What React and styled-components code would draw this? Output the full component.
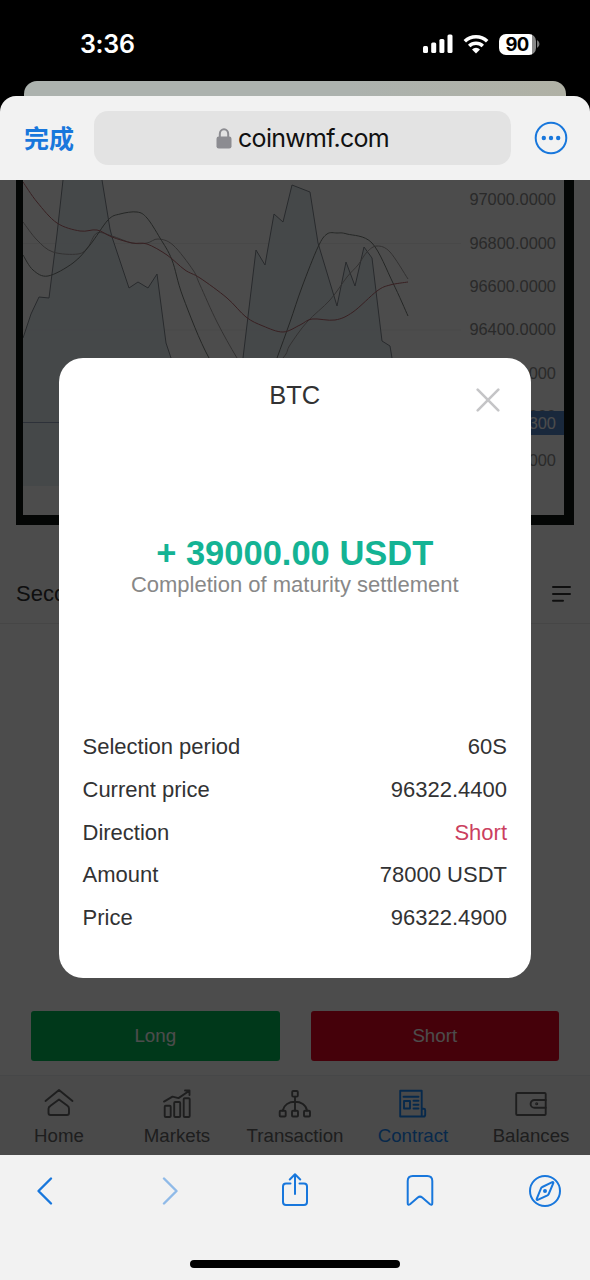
import React from 'react';
// Styling
import styled, {createGlobalStyle} from 'styled-components'

// Data
const prices = ['97000.0000', '96800.0000', '96600.0000', '96400.0000', '96200.0000', '96000.0000', '95800.0000']

const details = [
    {label: 'Selection period', value: '60S'},
    {label: 'Current price', value: '96322.4400'},
    {label: 'Direction', value: 'Short', short: true},
    {label: 'Amount', value: '78000 USDT'},
    {label: 'Price', value: '96322.4900'},
]

const priceLine = [
    [23, 338], [31, 314], [39, 297], [49, 298], [57, 234], [63, 180], [66, 150], [98, 150], [102, 180], [110, 229], [112, 237],
    [129, 288], [138, 282], [148, 288], [157, 274], [166, 343], [171, 358], [185, 400], [235, 400],
    [243, 358], [256, 250], [265, 265], [274, 214], [283, 222], [292, 185], [310, 192], [318, 243],
    [337, 306], [346, 262], [355, 286], [364, 247], [372, 258], [382, 341], [390, 346], [392, 358], [400, 410],
]
const slowLine = [
    [23, 182], [37, 202], [57, 223], [80, 231], [97, 230], [112, 237], [132, 243], [147, 244], [167, 255],
    [185, 270], [200, 278], [227, 298], [246, 317], [263, 326], [283, 332], [300, 325], [312, 319],
    [335, 320], [353, 312], [377, 291], [390, 285], [408, 282],
]
const fastLine = [
    [23, 255], [33, 270], [48, 276], [73, 263], [90, 245], [108, 220], [120, 214], [137, 212], [147, 218],
    [160, 238], [172, 260], [183, 297], [209, 358], [240, 400], [265, 390], [277, 358], [290, 322],
    [302, 287], [318, 247], [327, 234], [337, 233], [347, 234], [372, 243], [393, 283], [408, 316],
]
const midLine = [
    [23, 222], [37, 240], [53, 252], [78, 254], [88, 247], [97, 233], [112, 236], [132, 243], [147, 243],
    [158, 239], [173, 245], [193, 270], [200, 285], [217, 322], [237, 358], [255, 385], [283, 358],
    [290, 345], [307, 322], [330, 300], [347, 277], [358, 265], [367, 252], [377, 246], [390, 252], [408, 279],
]

const straight = points => 'M' + points.map(p => p.join(' ')).join('L')

// catmull-rom to bezier
const smooth = points => {
    let d = `M${points[0].join(' ')}`
    for (let i = 0; i < points.length - 1; i++) {
        const a = points[i - 1] || points[i]
        const b = points[i]
        const c = points[i + 1]
        const e = points[i + 2] || c
        d += `C${b[0] + (c[0] - a[0]) / 6} ${b[1] + (c[1] - a[1]) / 6} ${c[0] - (e[0] - b[0]) / 6} ${c[1] - (e[1] - b[1]) / 6} ${c[0]} ${c[1]}`
    }
    return d
}

const HomeIcon = () => (
    <TabIcon viewBox="0 0 36 34">
        <path d="M4.500 14L18 3l13.500 11M9.500 18.800L18 12.500l8.500 6.300q1.500 1 1.500 3V26q0 2-2 2H9.500q-2 0-2-2v-4.200q0-2 2-3z"/>
    </TabIcon>
)

const MarketsIcon = () => (
    <TabIcon viewBox="0 0 36 34">
        <rect x="5.700" y="18.700" width="6" height="11.300" rx="1"/>
        <rect x="15.200" y="15" width="6" height="15" rx="1"/>
        <rect x="24.700" y="11.300" width="6" height="18.700" rx="1"/>
        <path d="M5 14.600l8.500-5 6 1.500L30 4M26 3.500h4.500V8"/>
    </TabIcon>
)

const TransactionIcon = () => (
    <TabIcon viewBox="0 0 36 34">
        <rect x="15.200" y="4" width="5.600" height="5.600" rx="1"/>
        <rect x="2.700" y="23.700" width="6" height="5.800" rx="1"/>
        <rect x="15" y="23.700" width="6" height="5.800" rx="1"/>
        <rect x="27" y="23.700" width="6" height="5.800" rx="1"/>
        <path d="M18 9.600v14M5.700 23.500C7 18 12 14.800 18 14.800S29 18 30 23.500"/>
    </TabIcon>
)

const ContractIcon = () => (
    <TabIcon viewBox="0 0 36 34">
        <path d="M29.500 29.500H5.200V3.800h21.500v25.700M26.700 21.800h2q1.500 0 1.500 1.500v4.500q0 1.700-1.700 1.700M8.500 9.700h15"/>
        <rect x="9" y="14" width="6" height="7.500"/>
        <path d="M18.500 13.800h5M18.500 17.700h5M18.500 21.500h5"/>
    </TabIcon>
)

const BalancesIcon = () => (
    <TabIcon viewBox="0 0 36 34">
        <rect x="3.200" y="6" width="29.500" height="22" rx="1"/>
        <path d="M32.700 13H21.500a3.900 3.900 0 0 0 0 7.800h11.200"/>
        <circle cx="23.700" cy="16.800" r=".6"/>
    </TabIcon>
)

const tabs = [
    {name: 'Home', Icon: HomeIcon},
    {name: 'Markets', Icon: MarketsIcon},
    {name: 'Transaction', Icon: TransactionIcon},
    {name: 'Contract', Icon: ContractIcon, active: true},
    {name: 'Balances', Icon: BalancesIcon},
]

const StatusBar = () => (
    <Status>
        <Time>3:36</Time>
        <StatusIcons>
            <svg width="30" height="20" viewBox="0 0 30 20" fill="#fff">
                <rect x="0" y="12" width="5" height="7" rx="1.500"/>
                <rect x="8.200" y="8.500" width="5" height="10.500" rx="1.500"/>
                <rect x="16.400" y="5" width="5" height="14" rx="1.500"/>
                <rect x="24.500" y="0.500" width="5" height="18.500" rx="1.500"/>
            </svg>
            <svg width="26" height="20" viewBox="0 0 26 20" fill="none" stroke="#fff" strokeWidth="3.500">
                <path d="M1.800 7.300a16 16 0 0 1 22.400 0M6.200 12a9.800 9.800 0 0 1 13.600 0"/>
                <path d="M13 19.500l-4-4a5.600 5.600 0 0 1 8 0z" fill="#fff" stroke="none"/>
            </svg>
            <Battery>
                <Level>90</Level>
                <svg width="4" height="8" viewBox="0 0 4 8" fill="#777"><path d="M0 0q2.500 1.500 2.500 4T0 8z"/></svg>
            </Battery>
        </StatusIcons>
    </Status>
)

const Chart = () => (
    <ChartFrame>
        <Plot viewBox="23 180 438 335">
            <path d="M23 243.500H461M23 330H461" stroke="#f1f1f1"/>
            <path d={straight(priceLine) + 'V486H23Z'} fill="#e4edf3" fillOpacity=".85"/>
            <path d="M23 422.500H461" stroke="#98a6c0"/>
            <path d={straight(priceLine)} stroke="#858c94"/>
            <path d={smooth(midLine)} stroke="#a9a5a5"/>
            <path d={smooth(fastLine)} stroke="#7a807c"/>
            <path d={smooth(slowLine)} stroke="#bb6a70"/>
        </Plot>
        <Axis>
            {prices.map(price => <AxisLabel key={price}>{price}</AxisLabel>)}
            <PriceTag>96005.8300</PriceTag>
        </Axis>
    </ChartFrame>
)

const ResultDialog = () => (
    <Overlay>
        <Dialog>
            <DialogHeader>
                <DialogTitle>BTC</DialogTitle>
                <CloseButton aria-label="Close">
                    <svg width="24" height="24" viewBox="0 0 24 24" fill="none" stroke="#c5c5c7" strokeWidth="2.600" strokeLinecap="round">
                        <path d="M1.700 1.700l20.600 20.600M22.300 1.700L1.700 22.300"/>
                    </svg>
                </CloseButton>
            </DialogHeader>
            <Profit>
                <h2>+ 39000.00 USDT</h2>
                <p>Completion of maturity settlement</p>
            </Profit>
            <Details>
                {details.map(({label, value, short}) => (
                    <DetailRow key={label}>
                        <span>{label}</span>
                        <DetailValue $short={short}>{value}</DetailValue>
                    </DetailRow>
                ))}
            </Details>
        </Dialog>
    </Overlay>
)

const App = () => {
    return (
        <>
            <GlobalStyle/>
            <Phone>
                <StatusBar/>
                <BackSheet/>
                <Sheet>
                    <AddressBar>
                        <Done>完成</Done>
                        <Address>
                            <svg width="16" height="21" viewBox="0 0 16 21">
                                <rect x="0.500" y="8.500" width="15" height="12" rx="2.300" fill="#8c8c91"/>
                                <path d="M3.800 9.500V6a4.200 4.800 0 0 1 8.400 0v3.500" fill="none" stroke="#8c8c91" strokeWidth="2"/>
                            </svg>
                            <span>coinwmf.com</span>
                        </Address>
                        <svg width="34" height="34" viewBox="0 0 34 34" fill="#1877dc">
                            <circle cx="17" cy="17" r="15.300" fill="none" stroke="#1877dc" strokeWidth="2"/>
                            <circle cx="9.800" cy="17" r="2.200"/>
                            <circle cx="17" cy="17" r="2.200"/>
                            <circle cx="24.200" cy="17" r="2.200"/>
                        </svg>
                    </AddressBar>
                    <Page>
                        <Chart/>
                        <OrdersHeader>
                            <span>Second</span>
                            <svg width="20" height="18" viewBox="0 0 20 18" stroke="#323233" strokeWidth="2" strokeLinecap="round">
                                <path d="M2 2h17M2 9h17M2 15.700h10"/>
                            </svg>
                        </OrdersHeader>
                        <Actions>
                            <ActionButton $color="#00bb58">Long</ActionButton>
                            <ActionButton $color="#e80622">Short</ActionButton>
                        </Actions>
                        <TabBar>
                            {tabs.map(({name, Icon, active}) => (
                                <Tab key={name} $active={active}>
                                    <Icon/>
                                    <span>{name}</span>
                                </Tab>
                            ))}
                        </TabBar>
                        <ResultDialog/>
                    </Page>
                    <Toolbar>
                        <ToolIcon viewBox="0 0 32 36">
                            <path d="M22 5.500L9.500 18 22 30.500" strokeWidth="2.400"/>
                        </ToolIcon>
                        <ToolIcon viewBox="0 0 32 36" $disabled>
                            <path d="M10 5.500L22.500 18 10 30.500" strokeWidth="2.400"/>
                        </ToolIcon>
                        <ToolIcon viewBox="0 0 32 36">
                            <path d="M11.500 10.500H7q-3 0-3 3V29q0 3 3 3h18q3 0 3-3V13.500q0-3-3-3h-4.500M16 21V1.500M10.800 6.500L16 1.300l5.200 5.200"/>
                        </ToolIcon>
                        <ToolIcon viewBox="0 0 32 36">
                            <path d="M3.700 8q0-5 5-5h14.600q5 0 5 5v22q0 2.800-2.300 1.200l-7.800-6.700q-2.200-1.800-4.400 0L6 31.200Q3.700 32.800 3.700 30z"/>
                        </ToolIcon>
                        <ToolIcon viewBox="0 0 32 36">
                            <circle cx="16" cy="18" r="15"/>
                            <path d="M13.300 14l10-4.800q1.400-.5 1 1L19.700 21q-.4.900-1.200 1.300l-9.800 4.500q-1.400.5-1-1L12 15.300q.4-.9 1.300-1.300z"/>
                            <circle cx="16" cy="18" r="1" fill="#1877dc"/>
                        </ToolIcon>
                    </Toolbar>
                    <HomeIndicator/>
                </Sheet>
            </Phone>
        </>
    );
};

const GlobalStyle = createGlobalStyle`
  * {
    box-sizing: border-box;
    margin: 0;
    padding: 0;
  }
  body {
    background: #000;
    font-family: "Liberation Sans", Arial, sans-serif;
    color: #323233;
  }
  svg {
    display: block;
    flex-shrink: 0;
  }
  button {
    border: none;
    background: none;
    font: inherit;
  }
`;

const Phone = styled.div`
  width: 590px;
  height: 1280px;
  display: flex;
  flex-direction: column;
  background: #000;
  overflow: hidden;
`;

const Status = styled.div`
  height: 81px;
  padding: 7px 49px 0 80px;
  display: flex;
  align-items: center;
  justify-content: space-between;
  font-family: Inter, sans-serif;
  color: white;
`;

const Time = styled.span`
  font-size: 25px;
  font-weight: 600;
  letter-spacing: -0.3px;
`;

const StatusIcons = styled.div`
  display: flex;
  align-items: center;
  gap: 10px;
`;

const Battery = styled.div`
  display: flex;
  align-items: center;
  gap: 1px;
`;

const Level = styled.span`
  width: 37px;
  height: 21px;
  padding-right: 1px;
  border-radius: 7px;
  background: linear-gradient(to right, #fff 33px, #888 33px);
  color: black;
  font-size: 18.500px;
  font-weight: 700;
  letter-spacing: -0.8px;
  line-height: 21px;
  text-align: center;
`;

const BackSheet = styled.div`
  height: 15px;
  margin: 0 24px;
  border-radius: 13px 13px 0 0;
  background: linear-gradient(to right, #acb2ae 60%, #b0b1a5);
`;

const Sheet = styled.div`
  flex: 1;
  display: flex;
  flex-direction: column;
  background: #f2f2f2;
  border-radius: 16px 16px 0 0;
  overflow: hidden;
`;

const AddressBar = styled.header`
  height: 84px;
  padding: 0 22px 0 24px;
  display: flex;
  align-items: center;
  justify-content: space-between;
`;

const Done = styled.button`
  width: 50px;
  padding-bottom: 2px;
  color: #1877dc;
  font-family: "Noto Sans CJK SC", sans-serif;
  font-size: 25px;
  font-weight: 700;
  line-height: 36px;
  white-space: nowrap;
`;

const Address = styled.div`
  width: 417px;
  height: 54px;
  margin-right: 3px;
  display: flex;
  align-items: center;
  justify-content: center;
  gap: 6px;
  border-radius: 14px;
  background: #e3e3e3;
  color: #111;
  font-family: Inter, sans-serif;
  font-size: 25px;
  letter-spacing: -0.7px;
`;

const Page = styled.main`
  height: 975px;
  display: flex;
  flex-direction: column;
  position: relative;
  overflow: hidden;
  background: white;
`;

const ChartFrame = styled.div`
  height: 345px;
  margin: 0 16px;
  display: flex;
  border: solid #101512;
  border-width: 0 10px 10px 7px;
  overflow: hidden;
`;

const Plot = styled.svg`
  width: 438px;
  height: 335px;
  fill: none;
  stroke-width: 1;
  path {
    stroke-linejoin: round;
  }
`;

const Axis = styled.div`
  flex: 1;
  margin-top: -2px;
  position: relative;
  font-size: 16.400px;
  color: #8c8c8c;
`;

const AxisLabel = styled.div`
  height: 43.400px;
  padding-right: 8px;
  display: flex;
  align-items: center;
  justify-content: flex-end;
`;

// sits over the axis labels
const PriceTag = styled.div`
  position: absolute;
  top: 233px;
  left: 0;
  right: 0;
  height: 24px;
  padding-right: 8px;
  line-height: 24px;
  text-align: right;
  background: #5585c8;
  color: white;
`;

const OrdersHeader = styled.div`
  height: 60px;
  margin-top: 39px;
  padding: 0 19px 0 16px;
  display: flex;
  align-items: center;
  justify-content: space-between;
  border-bottom: 1px solid #e9e9ea;
  font-size: 22px;
`;

const Actions = styled.div`
  margin-top: auto;
  padding: 0 31px 14px;
  display: grid;
  grid-template-columns: 1fr 1fr;
  gap: 31px;
`;

const ActionButton = styled.button`
  height: 50px;
  border-radius: 3px;
  background: ${({$color}) => $color};
  color: white;
  font-size: 18.700px;
`;

const TabBar = styled.nav`
  height: 80px;
  padding-top: 11px;
  display: grid;
  grid-template-columns: repeat(5, 1fr);
  border-top: 1px solid #ebedf0;
  background: #f7f7f8;
`;

const Tab = styled.div`
  display: flex;
  flex-direction: column;
  align-items: center;
  gap: 4px;
  color: ${({$active}) => $active ? '#1989fa' : '#646566'};
  font-size: 18.670px;
  line-height: 22px;
`;

const TabIcon = styled.svg`
  width: 36px;
  height: 34px;
  fill: none;
  stroke: currentColor;
  stroke-width: 1.9;
  stroke-linecap: round;
  stroke-linejoin: round;
`;

const Overlay = styled.div`
  position: absolute;
  inset: 0;
  display: flex;
  align-items: center;
  justify-content: center;
  background: rgba(0, 0, 0, 0.7);
`;

const Dialog = styled.section`
  width: 472px;
  height: 620px;
  padding: 0 24px 38px 23.500px;
  display: flex;
  flex-direction: column;
  border-radius: 24px;
  background: white;
`;

const DialogHeader = styled.div`
  height: 84px;
  display: grid;
  grid-template-columns: 31px 1fr 31px;
`;

const DialogTitle = styled.h1`
  grid-column: 2;
  margin-top: 22px;
  text-align: center;
  font-size: 25.500px;
  font-weight: 400;
  line-height: 30px;
`;

const CloseButton = styled.button`
  height: 24px;
  margin-top: 30px;
`;

const Profit = styled.div`
  margin-top: 91px;
  text-align: center;
  h2 {
    color: #14b394;
    font-size: 34.500px;
    line-height: 40px;
  }
  p {
    color: #888;
    font-size: 22px;
    line-height: 24px;
  }
`;

const Details = styled.div`
  margin-top: auto;
`;

const DetailRow = styled.div`
  height: 42.800px;
  display: flex;
  align-items: center;
  justify-content: space-between;
  font-size: 22px;
`;

const DetailValue = styled.span`
  color: ${({$short}) => $short ? '#cb3f5f' : 'inherit'};
`;

const Toolbar = styled.footer`
  height: 72px;
  padding: 0 29px;
  display: flex;
  align-items: center;
  justify-content: space-between;
`;

const ToolIcon = styled.svg`
  width: 32px;
  height: 36px;
  fill: none;
  stroke: #1877dc;
  stroke-width: 2;
  stroke-linecap: round;
  stroke-linejoin: round;
  opacity: ${({$disabled}) => $disabled ? 0.45 : 1};
`;

const HomeIndicator = styled.div`
  width: 210px;
  height: 8px;
  margin: 33px auto 0;
  border-radius: 4px;
  background: black;
`;

export default App;
